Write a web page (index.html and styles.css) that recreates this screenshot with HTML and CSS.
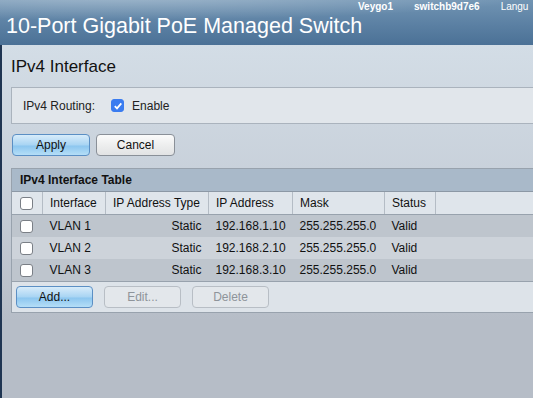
FILE: index.html
```html
<!DOCTYPE html>
<html lang="en">
<head>
    <meta charset="UTF-8">
    <title>IPv4 Interface</title>
    <link rel="stylesheet" href="styles.css">
</head>
<body>

<header class="topbar">
    <div class="user-links">
        <span>Veygo1</span>
        <span>switchb9d7e6</span>
        <span class="lang">Langu</span>
    </div>
    <h1>10-Port Gigabit PoE Managed Switch</h1>
</header>

<div class="page">
    <div class="content">
        <h2>IPv4 Interface</h2>

        <div class="routing-box">
            <span class="label">IPv4 Routing:</span>
            <span class="check checked">
                <svg width="10" height="10" viewBox="0 0 10 10"><path d="M1.8 5.2 L4 7.4 L8.3 2.4" fill="none" stroke="#fff" stroke-width="1.8"/></svg>
            </span>
            <span>Enable</span>
        </div>

        <div class="actions">
            <button class="btn btn-primary">Apply</button>
            <button class="btn">Cancel</button>
        </div>

        <div class="table-panel">
            <div class="table-title">IPv4 Interface Table</div>
            <table>
                <thead>
                    <tr>
                        <th class="col-check"><span class="check"></span></th>
                        <th class="col-if">Interface</th>
                        <th class="col-type">IP Address Type</th>
                        <th class="col-ip">IP Address</th>
                        <th class="col-mask">Mask</th>
                        <th class="col-status">Status</th>
                        <th></th>
                    </tr>
                </thead>
                <tbody id="rows"></tbody>
            </table>
            <div class="table-actions">
                <button class="btn btn-primary">Add...</button>
                <button class="btn btn-disabled">Edit...</button>
                <button class="btn btn-disabled">Delete</button>
            </div>
        </div>
    </div>
</div>

<script>
    const interfaces = [
        { name: "VLAN 1", type: "Static", ip: "192.168.1.10", mask: "255.255.255.0", status: "Valid" },
        { name: "VLAN 2", type: "Static", ip: "192.168.2.10", mask: "255.255.255.0", status: "Valid" },
        { name: "VLAN 3", type: "Static", ip: "192.168.3.10", mask: "255.255.255.0", status: "Valid" }
    ];

    const rows = document.getElementById("rows");
    interfaces.forEach(item => {
        rows.innerHTML += `
            <tr>
                <td class="col-check"><span class="check"></span></td>
                <td>${item.name}</td>
                <td class="right">${item.type}</td>
                <td>${item.ip}</td>
                <td>${item.mask}</td>
                <td>${item.status}</td>
                <td></td>
            </tr>
        `;
    });
</script>

</body>
</html>
```

FILE: styles.css
```css
body {
    margin: 0;
    padding: 0;
    font-family: "Liberation Sans", Arial, sans-serif;
    background: #b6bdc7;
    overflow: hidden;
}
.topbar {
    height: 45px;
    position: relative;
    background:
        radial-gradient(ellipse 420px 26px at 120px -6px, rgba(255, 255, 255, 0.35), rgba(255, 255, 255, 0) 100%),
        linear-gradient(180deg, #7194b3 0%, #5b80a3 55%, #4b7196 100%);
    color: white;
}
.topbar h1 {
    margin: 0;
    padding: 13px 0 0 6px;
    font-size: 21.5px;
    font-weight: normal;
    line-height: 26px;
    white-space: nowrap;
}
.user-links {
    position: absolute;
    top: 0;
    left: 358px;
    font-size: 10px;
    font-weight: bold;
    line-height: 13px;
    white-space: nowrap;
    display: flex;
    gap: 21px;
}
.user-links .lang {
    font-weight: normal;
}
.page {
    border-left: 2px solid #1f3552;
    min-height: 353px;
    background: linear-gradient(180deg, #d3dde6 0%, #c6ced8 45%, #b6bdc7 78%, #b6bdc7 100%);
}
.content {
    padding: 12px 0 0 9px;
}
.content h2 {
    margin: 0;
    font-size: 17px;
    font-weight: normal;
    line-height: 20px;
    color: #111;
}
.routing-box {
    margin-top: 10px;
    height: 35px;
    border: 1px solid #aab3bd;
    border-right: none;
    background: #e1e6eb;
    display: flex;
    align-items: center;
    padding-left: 11px;
    font-size: 12px;
    color: #222;
}
.routing-box .label {
    margin-right: 16px;
}
.routing-box .check {
    margin-right: 8px;
}
.check {
    display: inline-block;
    box-sizing: border-box;
    width: 13px;
    height: 13px;
    border: 1px solid #7a7f86;
    border-radius: 3px;
    background: #fff;
    vertical-align: middle;
}
.check.checked {
    background: #3a7cf0;
    border-color: #3a7cf0;
    display: inline-flex;
    align-items: center;
    justify-content: center;
}
.actions {
    margin-top: 10px;
    display: flex;
    gap: 6px;
    padding-left: 1px;
}
.btn {
    width: 79px;
    height: 22px;
    padding: 0;
    border: 1px solid #8a9098;
    border-radius: 4px;
    background: linear-gradient(180deg, #fbfbfb 0%, #eceded 55%, #e2e3e4 100%);
    font-family: "Liberation Sans", Arial, sans-serif;
    font-size: 12px;
    color: #111;
}
.btn-primary {
    width: 78px;
    border-color: #5b8fc4;
    background: linear-gradient(180deg, #d8ecfa 0%, #a8d4f3 50%, #8cc6ef 55%, #b5def7 100%);
}
.btn-disabled {
    border-color: #b8bec5;
    background: #e3e7eb;
    color: #8e949a;
}
.table-panel {
    margin-top: 12px;
    border: 1px solid #98a2ad;
    border-right: none;
    background: #dde3e9;
}
.table-title {
    height: 22px;
    line-height: 22px;
    padding-left: 8px;
    background: #a9b9c9;
    font-size: 12px;
    font-weight: bold;
    color: #111;
    border-bottom: 1px solid #8c98a5;
}
table {
    width: 100%;
    border-collapse: collapse;
    font-size: 12px;
    color: #111;
}
th {
    height: 22px;
    padding: 0 0 0 7px;
    text-align: left;
    font-weight: normal;
    background: #dfe5eb;
    border-right: 1px solid #b4bcc5;
    border-bottom: 1px solid #98a2ad;
}
th:last-child {
    border-right: none;
}
td {
    height: 22px;
    padding: 0 0 0 7px;
    white-space: nowrap;
}
tbody tr:nth-child(odd) {
    background: #bec5cd;
}
tbody tr:nth-child(even) {
    background: #cdd3da;
}
tbody tr:last-child td {
    border-bottom: 1px solid #98a2ad;
}
td.right {
    text-align: right;
    padding-right: 7px;
}
.col-check {
    width: 22px;
    padding-left: 8px;
}
.col-if { width: 55px; }
.col-type { width: 95px; }
.col-ip { width: 76px; }
.col-mask { width: 84px; }
.col-status { width: 43px; }
.table-actions {
    display: flex;
    gap: 11px;
    padding: 4px 0 4px 4px;
}
.table-actions .btn {
    width: 77px;
    height: 22px;
}
```
